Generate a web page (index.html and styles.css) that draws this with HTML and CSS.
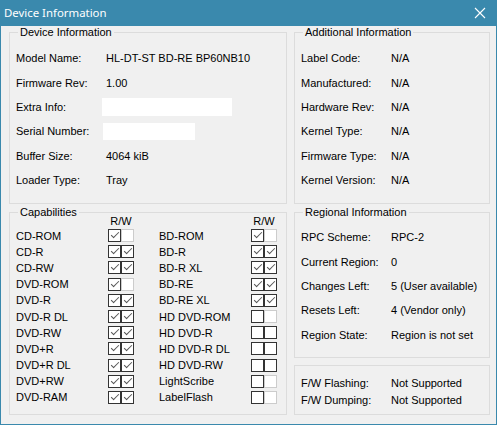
FILE: index.html
```html
<!DOCTYPE html>
<html>
<head>
<meta charset="utf-8">
<link rel="stylesheet" href="styles.css">
</head>
<body>
<div class="window">
  <div class="titlebar">
    <span class="title">Device Information</span>
    <svg class="close" width="12" height="12" viewBox="0 0 12 12"><path d="M1 1 L11 11 M11 1 L1 11" stroke="#fff" stroke-width="1.1" fill="none"/></svg>
  </div>
  <div class="content">
    <fieldset class="group dev">
      <legend>Device Information</legend>
      <div class="row"><span class="lbl">Model Name:</span><span class="val">HL-DT-ST BD-RE BP60NB10</span></div>
      <div class="row"><span class="lbl">Firmware Rev:</span><span class="val">1.00</span></div>
      <div class="row"><span class="lbl">Extra Info:</span><span class="blank wide"></span></div>
      <div class="row"><span class="lbl">Serial Number:</span><span class="blank narrow"></span></div>
      <div class="row"><span class="lbl">Buffer Size:</span><span class="val">4064 kiB</span></div>
      <div class="row"><span class="lbl">Loader Type:</span><span class="val">Tray</span></div>
    </fieldset>
    <fieldset class="group add">
      <legend>Additional Information</legend>
      <div class="row"><span class="lbl">Label Code:</span><span class="val">N/A</span></div>
      <div class="row"><span class="lbl">Manufactured:</span><span class="val">N/A</span></div>
      <div class="row"><span class="lbl">Hardware Rev:</span><span class="val">N/A</span></div>
      <div class="row"><span class="lbl">Kernel Type:</span><span class="val">N/A</span></div>
      <div class="row"><span class="lbl">Firmware Type:</span><span class="val">N/A</span></div>
      <div class="row"><span class="lbl">Kernel Version:</span><span class="val">N/A</span></div>
    </fieldset>
    <fieldset class="group caps">
      <legend>Capabilities</legend>
      <div class="capcols">
        <div class="capcol">
          <div class="caphead"><span class="rw">R/W</span></div>
          <div class="caprow"><span class="clbl">CD-ROM</span><span class="cb on"></span><span class="cb dis"></span></div>
          <div class="caprow"><span class="clbl">CD-R</span><span class="cb on"></span><span class="cb on"></span></div>
          <div class="caprow"><span class="clbl">CD-RW</span><span class="cb on"></span><span class="cb on"></span></div>
          <div class="caprow"><span class="clbl">DVD-ROM</span><span class="cb on"></span><span class="cb dis"></span></div>
          <div class="caprow"><span class="clbl">DVD-R</span><span class="cb on"></span><span class="cb on"></span></div>
          <div class="caprow"><span class="clbl">DVD-R DL</span><span class="cb on"></span><span class="cb on"></span></div>
          <div class="caprow"><span class="clbl">DVD-RW</span><span class="cb on"></span><span class="cb on"></span></div>
          <div class="caprow"><span class="clbl">DVD+R</span><span class="cb on"></span><span class="cb on"></span></div>
          <div class="caprow"><span class="clbl">DVD+R DL</span><span class="cb on"></span><span class="cb on"></span></div>
          <div class="caprow"><span class="clbl">DVD+RW</span><span class="cb on"></span><span class="cb on"></span></div>
          <div class="caprow"><span class="clbl">DVD-RAM</span><span class="cb on"></span><span class="cb on"></span></div>
        </div>
        <div class="capcol">
          <div class="caphead"><span class="rw">R/W</span></div>
          <div class="caprow"><span class="clbl">BD-ROM</span><span class="cb on"></span><span class="cb dis"></span></div>
          <div class="caprow"><span class="clbl">BD-R</span><span class="cb on"></span><span class="cb on"></span></div>
          <div class="caprow"><span class="clbl">BD-R XL</span><span class="cb on"></span><span class="cb on"></span></div>
          <div class="caprow"><span class="clbl">BD-RE</span><span class="cb on"></span><span class="cb on"></span></div>
          <div class="caprow"><span class="clbl">BD-RE XL</span><span class="cb on"></span><span class="cb on"></span></div>
          <div class="caprow"><span class="clbl">HD DVD-ROM</span><span class="cb"></span><span class="cb dis"></span></div>
          <div class="caprow"><span class="clbl">HD DVD-R</span><span class="cb"></span><span class="cb"></span></div>
          <div class="caprow"><span class="clbl">HD DVD-R DL</span><span class="cb"></span><span class="cb"></span></div>
          <div class="caprow"><span class="clbl">HD DVD-RW</span><span class="cb"></span><span class="cb"></span></div>
          <div class="caprow"><span class="clbl">LightScribe</span><span class="cb"></span><span class="cb dis"></span></div>
          <div class="caprow"><span class="clbl">LabelFlash</span><span class="cb"></span><span class="cb dis"></span></div>
        </div>
      </div>
    </fieldset>
    <div class="rightcol">
      <fieldset class="group reg">
        <legend>Regional Information</legend>
        <div class="row"><span class="lbl">RPC Scheme:</span><span class="val">RPC-2</span></div>
        <div class="row"><span class="lbl">Current Region:</span><span class="val">0</span></div>
        <div class="row"><span class="lbl">Changes Left:</span><span class="val">5 (User available)</span></div>
        <div class="row"><span class="lbl">Resets Left:</span><span class="val">4 (Vendor only)</span></div>
        <div class="row"><span class="lbl">Region State:</span><span class="val">Region is not set</span></div>
      </fieldset>
      <fieldset class="group fw">
        <div class="row short"><span class="lbl">F/W Flashing:</span><span class="val">Not Supported</span></div>
        <div class="row short"><span class="lbl">F/W Dumping:</span><span class="val">Not Supported</span></div>
      </fieldset>
    </div>
  </div>
</div>
</body>
</html>
```
FILE: styles.css
```css
html, body {
  margin: 0;
  padding: 0;
}
body {
  font-family: "Liberation Sans", Arial, sans-serif;
  font-size: 11px;
  color: #000;
  background: #fff;
}
.window {
  width: 497px;
  height: 425px;
  box-sizing: border-box;
  border: 1px solid #3a89ad;
  border-top: none;
  background: #f0f0f0;
  display: flex;
  flex-direction: column;
}
.titlebar {
  height: 26px;
  flex: none;
  background: #3a89ad;
  display: flex;
  align-items: center;
  justify-content: space-between;
  padding: 0 10px 1px 3px;
  box-sizing: border-box;
}
.title {
  color: #fff;
  font-family: "Noto Sans", "Open Sans", sans-serif;
  font-size: 11.4px;
}
.close {
  display: block;
}
.content {
  flex: 1;
  display: grid;
  grid-template-columns: 278px 196px;
  grid-template-rows: 178px 209px;
  column-gap: 7px;
  row-gap: 2px;
  padding: 0 6px 0 8px;
}
.group {
  margin: 0;
  border: 1px solid #dcdcdc;
  padding: 0 6px;
  box-sizing: border-box;
  min-width: 0;
}
.group legend {
  padding: 0 2px;
  margin-left: 2px;
  line-height: 13px;
}
.dev {
  padding-top: 7px;
}
.add {
  padding-top: 7px;
}
.row {
  height: 24.4px;
  display: flex;
  align-items: center;
}
.row.short {
  height: 17px;
}
.lbl {
  width: 90px;
  flex: none;
  white-space: nowrap;
}
.val {
  white-space: nowrap;
}
.blank {
  display: block;
  height: 18px;
  background: #fff;
  margin-left: -4px;
}
.blank.wide {
  width: 130px;
}
.blank.narrow {
  width: 92px;
  margin-left: -3px;
  height: 17px;
}
.caps {
  padding-top: 0;
}
.capcols {
  display: flex;
  gap: 25px;
  margin-top: -4px;
}
.capcol {
  display: flex;
  flex-direction: column;
}
.caphead {
  height: 12.5px;
  display: flex;
  align-items: center;
  padding-left: 92px;
}
.rw {
  width: 26px;
  text-align: center;
  line-height: 12px;
}
.caprow {
  height: 16.2px;
  display: flex;
  align-items: center;
}
.clbl {
  width: 92px;
  flex: none;
  white-space: nowrap;
}
.cb {
  width: 13px;
  height: 13px;
  box-sizing: border-box;
  border: 1px solid #333;
  background: #fff;
  position: relative;
  flex: none;
}
.cb.dis {
  border-color: #cccccc;
}
.cb.on::after {
  content: "";
  position: absolute;
  left: 2px;
  top: 2px;
  width: 7px;
  height: 3px;
  border-left: 1px solid #555;
  border-bottom: 1px solid #555;
  transform: rotate(-45deg);
}
.rightcol {
  display: flex;
  flex-direction: column;
  gap: 7px;
}
.reg {
  height: 152px;
  padding-top: 6px;
}
.fw {
  height: 50px;
  padding-top: 8px;
}
```
